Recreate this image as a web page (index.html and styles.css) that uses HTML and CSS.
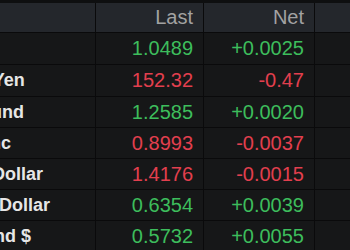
FILE: index.html
```html
<!DOCTYPE html>
<html>
<head>
<meta charset="utf-8">
<link rel="stylesheet" href="styles.css">
</head>
<body>
<div class="viewport">
  <div class="grid">
    <div class="row head">
      <div class="cell name"></div>
      <div class="cell num">Last</div>
      <div class="cell num">Net</div>
      <div class="cell num"></div>
    </div>
    <div class="row">
      <div class="cell name">Euro</div>
      <div class="cell num up">1.0489</div>
      <div class="cell num up">+0.0025</div>
      <div class="cell num"></div>
    </div>
    <div class="row">
      <div class="cell name">Japanese Yen</div>
      <div class="cell num down">152.32</div>
      <div class="cell num down">-0.47</div>
      <div class="cell num"></div>
    </div>
    <div class="row">
      <div class="cell name">British Pound</div>
      <div class="cell num up">1.2585</div>
      <div class="cell num up">+0.0020</div>
      <div class="cell num"></div>
    </div>
    <div class="row">
      <div class="cell name">Swiss Franc</div>
      <div class="cell num down">0.8993</div>
      <div class="cell num down">-0.0037</div>
      <div class="cell num"></div>
    </div>
    <div class="row">
      <div class="cell name">Canadian Dollar</div>
      <div class="cell num down">1.4176</div>
      <div class="cell num down">-0.0015</div>
      <div class="cell num"></div>
    </div>
    <div class="row">
      <div class="cell name">Australian Dollar</div>
      <div class="cell num up">0.6354</div>
      <div class="cell num up">+0.0039</div>
      <div class="cell num"></div>
    </div>
    <div class="row">
      <div class="cell name">New Zealand $</div>
      <div class="cell num up">0.5732</div>
      <div class="cell num up">+0.0055</div>
      <div class="cell num"></div>
    </div>
  </div>
</div>
</body>
</html>
```
FILE: styles.css
```css
html, body {
  margin: 0;
  padding: 0;
  background: #151617;
}
.viewport {
  width: 350px;
  height: 250px;
  overflow: hidden;
}
.grid {
  margin-left: -90px;
  width: 560px;
  display: flex;
  flex-direction: column;
}
.row {
  display: grid;
  grid-template-columns: 186px 108px 111px 155px;
  height: 30px;
  border-bottom: 1px solid #0a0a0b;
  background: #161718;
}
.row:nth-child(2),
.row:nth-child(3) {
  height: 31px;
}
.row.head {
  height: 29px;
  border-top: 3px solid #0e0f10;
  background: #24272c;
}
.cell {
  display: flex;
  align-items: center;
  border-right: 1px solid #0a0a0b;
  white-space: nowrap;
  overflow: hidden;
}
.name {
  font-family: "Liberation Sans", Arial, sans-serif;
  font-weight: bold;
  font-size: 18px;
  color: #e6e6e6;
  justify-content: flex-start;
  text-indent: -4px;
}
.num {
  font-family: "Liberation Sans", Arial, sans-serif;
  font-size: 20px;
  justify-content: flex-end;
  padding-right: 10px;
}
.head .num {
  color: #a2a2a2;
}
.up {
  color: #3dbd5c;
}
.down {
  color: #e23f4e;
}
```
